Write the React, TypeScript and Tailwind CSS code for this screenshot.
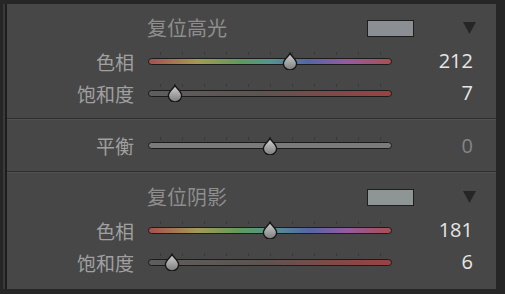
import React from 'react';

// 色调分离面板（高光 / 平衡 / 阴影）
const CJK = "font-['Noto_Sans_CJK_SC',sans-serif]";

const HUE_TRACK =
  'bg-[linear-gradient(to_right,#a65050,#a49a55_20%,#5f9a5c_38%,#55958f_50%,#5566a6_66%,#955aa0_82%,#a85050)]';
const SAT_TRACK = 'bg-[linear-gradient(to_right,#5e5e5e,#5c5450_45%,#9a4242)]';
const GRAY_TRACK = 'bg-[#7a7a7a]';

const ticks = [12, 34, 56, 78, 100, 122, 144, 166, 188, 210, 232];

function Thumb({ left }: { left: number }) {
  return (
    <svg
      className="absolute top-[7px]"
      style={{ left: left - 8 }}
      width="16"
      height="18"
      viewBox="0 0 16 18"
    >
      <defs>
        <linearGradient id="thumbFill" x1="0" y1="0" x2="0" y2="1">
          <stop offset="0" stopColor="#d4d4d4" />
          <stop offset="1" stopColor="#7c7c7c" />
        </linearGradient>
      </defs>
      <path
        d="M8 1.2 C9.2 4.2 14.6 7.6 14.6 11.4 A6.6 6.6 0 0 1 1.4 11.4 C1.4 7.6 6.8 4.2 8 1.2 Z"
        fill="url(#thumbFill)"
        stroke="#161616"
        strokeWidth="1.4"
      />
    </svg>
  );
}

function Slider({ track, thumb }: { track: string; thumb: number }) {
  return (
    <div className="relative w-[244px] h-[32px] flex items-center">
      {ticks.map((t) => (
        <span key={t} className="absolute top-[7px] w-px h-[3px] bg-[#383838]" style={{ left: t }} />
      ))}
      <div className={`w-full h-[7px] rounded-full border border-[#1c1c1c] ${track}`} />
      <Thumb left={thumb} />
    </div>
  );
}

function Row({
  label,
  track,
  thumb,
  value,
  dim,
}: {
  label: string;
  track: string;
  thumb: number;
  value: string;
  dim?: boolean;
}) {
  return (
    <div className="flex items-center h-[32px]">
      <div className={`w-[127px] text-right text-[19px] leading-none text-[#a0a0a0] ${CJK}`}>{label}</div>
      <div className="ml-[14px]">
        <Slider track={track} thumb={thumb} />
      </div>
      <div
        className={`w-[81px] text-right text-[20px] leading-none font-['Open_Sans',sans-serif] ${
          dim ? 'text-[#858585]' : 'text-[#e6e6e6]'
        }`}
      >
        {value}
      </div>
    </div>
  );
}

function Header({ title, swatch }: { title: string; swatch: string }) {
  return (
    <div className="flex items-center h-[24px]">
      <div className={`ml-[140px] flex-1 text-[20px] leading-none text-[#8e8e8e] ${CJK}`}>{title}</div>
      <div className={`w-[47px] h-[17px] border border-[#1e1e1e] ${swatch}`} />
      <svg className="ml-[49px] mr-[20px]" width="13" height="12" viewBox="0 0 13 12">
        <polygon points="0,0 13,0 6.5,12" fill="#262626" />
      </svg>
    </div>
  );
}

export default function App() {
  return (
    <div className="w-[505px] h-[294px] bg-[#262626] pl-[3px] pt-[4px] pr-[9px] pb-[5px] flex">
      <div className="flex-1 flex border-l-2 border-[#3a3a3a]">
        <div className="flex-1 flex border-l-2 border-[#1e1e1e]">
          <div className="flex-1 bg-[#474747] flex flex-col">
            <div className="h-[115px] pt-[12px] border-b border-[#2e2e2e]">
              <Header title="复位高光" swatch="bg-[#8b8e93]" />
              <div className="mt-[5px]">
                <Row label="色相" track={HUE_TRACK} thumb={142} value="212" />
                <Row label="饱和度" track={SAT_TRACK} thumb={27} value="7" />
              </div>
            </div>
            <div className="h-[53px] border-t border-[#515151] border-b border-b-[#2e2e2e] flex items-center">
              <Row label="平衡" track={GRAY_TRACK} thumb={122} value="0" dim />
            </div>
            <div className="flex-1 pt-[12px] border-t border-[#515151]">
              <Header title="复位阴影" swatch="bg-[#8e9695]" />
              <div className="mt-[5px]">
                <Row label="色相" track={HUE_TRACK} thumb={122} value="181" />
                <Row label="饱和度" track={SAT_TRACK} thumb={24} value="6" />
              </div>
            </div>
          </div>
        </div>
      </div>
    </div>
  );
}
